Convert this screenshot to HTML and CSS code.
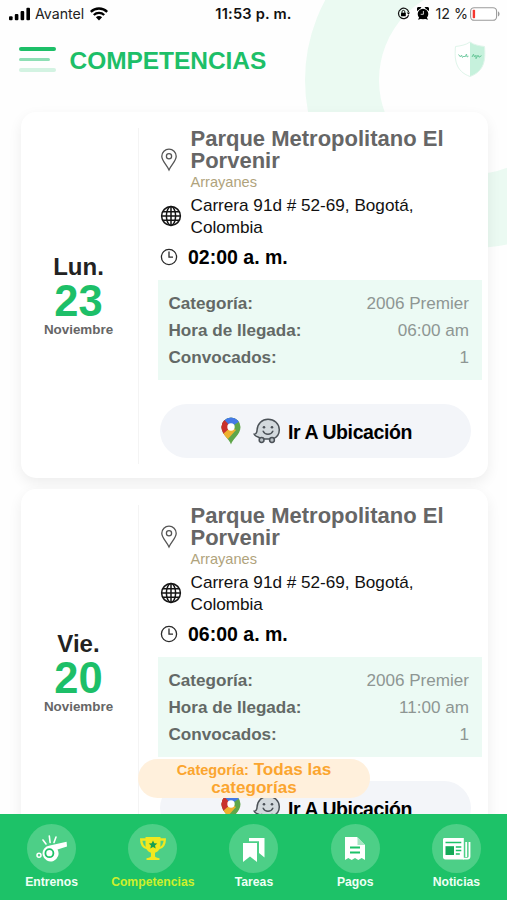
FILE: index.html
```html
<!DOCTYPE html>
<html lang="es">
<head>
<meta charset="utf-8">
<meta name="viewport" content="width=device-width, initial-scale=1">
<title>Competencias</title>
<link rel="stylesheet" href="styles.css">
</head>
<body>
<svg class="defs" aria-hidden="true">
  <symbol id="pin" viewBox="0 0 18 24">
    <path d="M9 22C6.500 16.500 1.800 13 1.800 8.300a7.200 7.200 0 0 1 14.400 0C16.200 13 11.500 16.500 9 22z" fill="none" stroke="#555" stroke-width="1.300"/>
    <circle cx="9" cy="8.300" r="2.600" fill="none" stroke="#555" stroke-width="1.300"/>
  </symbol>
  <symbol id="globe" viewBox="0 0 22 22">
    <g fill="none" stroke="#151515" stroke-width="1.500">
      <circle cx="11" cy="11" r="9.400"/>
      <ellipse cx="11" cy="11" rx="4.600" ry="9.400"/>
      <path d="M11 1.600v18.800M1.600 11h18.800M3 6.700h16M3 15.300h16"/>
    </g>
  </symbol>
  <symbol id="clock" viewBox="0 0 18 18">
    <g fill="none" stroke="#2a2a2a" stroke-width="1.300">
      <circle cx="9" cy="9" r="7.600"/>
      <path d="M9 3.600v5.600h4"/>
    </g>
  </symbol>
  <symbol id="maps" viewBox="0 0 20 28">
    <clipPath id="drop"><path d="M10 27.500C8.500 22 .5 17.500.5 9.900a9.500 9.500 0 0 1 19 0C19.500 17.500 11.500 22 10 27.500z"/></clipPath>
    <g clip-path="url(#drop)">
      <path d="M0 0h20v28H0z" fill="#5fa64a"/>
      <path d="M10 10L3 3.500 -2 8v12l4.500-1z" fill="#c9302c"/>
      <path d="M10 10L1.500 17.500 6 23l9-10z" fill="#eeb12f"/>
      <path d="M10 10L1 3.200 5-1h13l1 5z" fill="#4479e6"/>
      <path d="M10 10L0 12V0l4 3.400z" fill="#c9302c"/>
    </g>
    <circle cx="10" cy="10" r="3.700" fill="#fff"/>
  </symbol>
  <symbol id="waze" viewBox="0 0 28 26">
    <path d="M5.600 19.300C3.500 18.600 1.800 17.600 1.200 16.200c2.600-.2 2.800-1.800 2.900-4.400C4.500 5.600 9 1.200 15 1.200c6.300 0 11.300 4.700 11.300 10.500 0 4.500-2.600 7.800-6.600 9.200L9 21.100z" fill="#d3d9dd" stroke="#4b5157" stroke-width="1.500"/>
    <circle cx="8.600" cy="22" r="2.400" fill="#b9c0c5" stroke="#4b5157" stroke-width="1.500"/>
    <circle cx="19" cy="22" r="2.400" fill="#b9c0c5" stroke="#4b5157" stroke-width="1.500"/>
    <circle cx="11" cy="9.200" r="1.300" fill="#4b5157"/>
    <circle cx="19" cy="9.200" r="1.300" fill="#4b5157"/>
    <path d="M10.200 13.200c1.800 4 7.800 4 9.600 0" fill="none" stroke="#4b5157" stroke-width="1.500" stroke-linecap="round"/>
  </symbol>
</svg>

<div class="app">
  <div class="ring"></div>

  <div class="status">
    <div class="status-left">
      <svg width="22" height="14" viewBox="0 0 22 14"><rect x="0" y="9.200" width="3.600" height="4" rx="1"/><rect x="5.800" y="7" width="3.600" height="6.200" rx="1"/><rect x="11.600" y="4" width="3.600" height="9.200" rx="1"/><rect x="17.400" y=".8" width="3.600" height="12.400" rx="1"/></svg>
      <span class="carrier">Avantel</span>
      <svg width="18" height="14" viewBox="0 0 18 14"><g fill="none" stroke="#000" stroke-width="2.300"><path d="M.8 4.900a11.600 11.600 0 0 1 16.400 0"/><path d="M3.800 8a7.400 7.400 0 0 1 10.400 0"/></g><path d="M9 13.500L5.900 10.300a4.400 4.400 0 0 1 6.200 0z"/></svg>
    </div>
    <div class="time">11:53 p. m.</div>
    <div class="status-right">
      <svg width="13" height="13" viewBox="0 0 13 13"><path d="M11.600 8.200A5.200 5.200 0 1 1 11.700 5" fill="none" stroke="#111" stroke-width="1.200"/><path d="M9.700 5.400h3.300l-1.500 2.400z"/><rect x="4" y="5.700" width="4.800" height="3.500" rx=".5"/><path d="M5 6V4.800a1.400 1.400 0 0 1 2.800 0V6" fill="none" stroke="#111"/></svg>
      <svg class="alarm" width="12" height="13" viewBox="0 0 12 13"><circle cx="6" cy="7" r="5.300"/><path d="M.2 4a2.500 2.500 0 0 1 4.200-3.200zM11.800 4A2.500 2.500 0 0 0 7.600.8zM1 12.800l1.700-3.500 2.500 2.200zM11 12.800L9.300 9.300l-2.500 2.200z"/><path d="M6.400 4v3.300H3.700" fill="none" stroke="#fff" stroke-width=".8"/></svg>
      <span class="percent">12 %</span>
      <svg width="30" height="14" viewBox="0 0 30 14"><rect x=".6" y=".7" width="26" height="12.600" rx="3.600" fill="#fff" stroke="#9b9b9b" stroke-width="1.100"/><path d="M28 4.600c2 .5 2 4.300 0 4.800z" fill="#9b9b9b"/><rect x="2.700" y="2.800" width="2.400" height="8.400" rx=".8" fill="#f5372f"/></svg>
    </div>
  </div>

  <header class="header">
    <div class="menu"><i></i><i></i><i></i></div>
    <h1>COMPETENCIAS</h1>
    <svg class="shield" width="32" height="37" viewBox="0 0 32 37">
      <path d="M16 1C12 4 6 5 1.500 5.500 .5 18 1 30 16 35.500z" fill="#fff"/>
      <path d="M16 1c4 3 10 4 14.500 4.500C31.500 18 31 30 16 35.500z" fill="#c6f1dc"/>
      <path d="M16 1C12 4 6 5 1.500 5.500 .5 18 1 30 16 35.500 31 30 31.500 18 30.500 5.500 26 5 20 4 16 1z" fill="none" stroke="#dff5ea"/>
      <path d="M4.500 13.500l2 2.500 1-2 1 2.500 1.500-1.500 1 1 1.500-3 .5 3 1.500-.8" fill="none" stroke="#78cda6"/>
      <path d="M18 16l1.500-2.800 1 2.800 1.500-1.800v3.500l2-3.500 1 2 2.500-1.500" fill="none" stroke="#67c798"/>
    </svg>
  </header>

  <main class="list">
    <article class="card">
      <div class="date"><span class="day">Lun.</span><span class="num">23</span><span class="month">Noviembre</span></div>
      <div class="body">
        <div class="row"><svg class="ico-pin"><use href="#pin"/></svg><div><h2>Parque Metropolitano El Porvenir</h2><p class="field">Arrayanes</p></div></div>
        <div class="row address"><svg class="ico-globe"><use href="#globe"/></svg><p>Carrera 91d # 52-69, Bogotá, Colombia</p></div>
        <div class="row hour"><svg class="ico-clock"><use href="#clock"/></svg><b>02:00 a. m.</b></div>
        <dl class="info">
          <div><dt>Categoría:</dt><dd>2006 Premier</dd></div>
          <div><dt>Hora de llegada:</dt><dd>06:00 am</dd></div>
          <div><dt>Convocados:</dt><dd>1</dd></div>
        </dl>
        <button class="go"><svg class="ico-maps"><use href="#maps"/></svg><svg class="ico-waze"><use href="#waze"/></svg><span>Ir A Ubicación</span></button>
      </div>
    </article>

    <article class="card">
      <div class="date"><span class="day">Vie.</span><span class="num">20</span><span class="month">Noviembre</span></div>
      <div class="body">
        <div class="row"><svg class="ico-pin"><use href="#pin"/></svg><div><h2>Parque Metropolitano El Porvenir</h2><p class="field">Arrayanes</p></div></div>
        <div class="row address"><svg class="ico-globe"><use href="#globe"/></svg><p>Carrera 91d # 52-69, Bogotá, Colombia</p></div>
        <div class="row hour"><svg class="ico-clock"><use href="#clock"/></svg><b>06:00 a. m.</b></div>
        <dl class="info">
          <div><dt>Categoría:</dt><dd>2006 Premier</dd></div>
          <div><dt>Hora de llegada:</dt><dd>11:00 am</dd></div>
          <div><dt>Convocados:</dt><dd>1</dd></div>
        </dl>
        <button class="go"><svg class="ico-maps"><use href="#maps"/></svg><svg class="ico-waze"><use href="#waze"/></svg><span>Ir A Ubicación</span></button>
      </div>
    </article>
  </main>

  <div class="filter"><small>Categoría:</small> Todas las<br>categorías</div>

  <nav class="tabs">
    <a class="tab">
      <span class="disc"><svg width="34" height="30" viewBox="0 0 34 30"><path d="M14.800 11.500L31.600 7.800 32 12.500 22.500 15.500A8 8 0 1 1 14.800 11.500z" fill="#fff"/><circle cx="14.400" cy="19.200" r="4" fill="#fff" stroke="#1dc268" stroke-width="1.800"/><circle cx="4" cy="21.300" r="2" fill="none" stroke="#fff" stroke-width="1.500"/><path d="M8 6l3 4M14.300 2l.8 6.500M21 3l-2 5.500" stroke="#fff" stroke-width="1.600" stroke-linecap="round"/></svg></span>
      <span>Entrenos</span>
    </a>
    <a class="tab active">
      <span class="disc"><svg width="28" height="26" viewBox="0 0 28 26"><path d="M6.500 1h15v7c0 5-2.500 8-5.500 8.700V20c0 1.200 1 1.500 4.500 2.300V24h-13v-1.700C11 21.500 12 21.200 12 20v-3.300C9 16 6.500 13 6.500 8z" fill="#f1e81f"/><path d="M7 3.500H2.200c0 5 2 8 6.300 9M21 3.500h4.800c0 5-2 8-6.300 9" fill="none" stroke="#f1e81f" stroke-width="2.300"/><path d="M14 4.500l1.300 2.800 3 .3-2.300 2 .7 3-2.700-1.600-2.700 1.600.7-3-2.300-2 3-.3z" fill="#169f52"/></svg></span>
      <span>Competencias</span>
    </a>
    <a class="tab">
      <span class="disc"><svg width="26" height="28" viewBox="0 0 26 28"><path d="M2 8h14v19l-7-5.600L2 27z" fill="#fff"/><path d="M8 6.200V3h15.500v19.500L18 18V6.200z" fill="#fff"/></svg></span>
      <span>Tareas</span>
    </a>
    <a class="tab">
      <span class="disc"><svg width="24" height="26" viewBox="0 0 24 26"><path d="M2 1h12l8 8v15l-3.300-2-3.400 2-3.300-2-3.300 2-3.400-2L2 24z" fill="#fff"/><path d="M14.500 1l7.500 8h-7.500z" fill="#a7e6c4"/><path d="M7 11.500h10M7 16.500h10" stroke="#1dc268" stroke-width="2"/></svg></span>
      <span>Pagos</span>
    </a>
    <a class="tab">
      <span class="disc"><svg width="30" height="26" viewBox="0 0 30 26"><path d="M3.500 2h19.300v21.500H4.500C2.800 23.500 2 22.500 2 21V3.500C2 2.500 2.500 2 3.500 2z" fill="#fff"/><path d="M25.200 6v15M22 22.600h4.500c1.500 0 2-.6 2-2V6" fill="none" stroke="#fff" stroke-width="1.800"/><path d="M4.500 6.600h15.800M14.800 11h5.500M14.800 14.500h5.500M14.800 18h4" stroke="#1dc268" stroke-width="1.500"/><rect x="4.500" y="10.200" width="8.500" height="8.800" fill="#15a958"/></svg></span>
      <span>Noticias</span>
    </a>
  </nav>
</div>
</body>
</html>
```

FILE: styles.css
```css
* { box-sizing: border-box; margin: 0; padding: 0; }

body {
  font-family: "Liberation Sans", Arial, sans-serif;
  background: #fff;
  overflow: hidden;
}

.defs { position: absolute; width: 0; height: 0; }
svg { display: block; flex: none; }

.app {
  position: relative;
  width: 507px;
  height: 900px;
  overflow: hidden;
  display: flex;
  flex-direction: column;
  background: #fefefe;
}

/* decorative ring behind the header */
.ring {
  position: absolute;
  left: 305px;
  top: -88px;
  width: 336px;
  height: 336px;
  border: 74px solid #ebfaf2;
  border-radius: 50%;
}

.status {
  position: relative;
  height: 27px;
  display: grid;
  grid-template-columns: 1fr auto 1fr;
  align-items: center;
  padding: 0 7px 0 9px;
  font-family: Inter, sans-serif;
  color: #222;
}
.status-left, .status-right { display: flex; align-items: center; }
.status-right { justify-content: flex-end; }
.carrier { font-size: 14.2px; margin: 0 6px 0 4px; }
.time { font-size: 14.6px; font-weight: 600; letter-spacing: 0.2px; margin-right: 2px; color: #111; }
.alarm { margin: 0 6px 0 7px; }
.percent { font-size: 14.3px; margin-right: 2px; }

.header {
  position: relative;
  height: 85px;
  display: flex;
  align-items: flex-start;
  padding: 14px 21px 0 19px;
}
.menu { width: 37px; padding-top: 6px; display: flex; flex-direction: column; gap: 7px; margin-right: 13.500px; }
.menu i { height: 3.500px; border-radius: 2px; background: #1dbf68; }
.menu i:nth-child(2) { width: 31px; background: #8edfb5; }
.menu i:nth-child(3) { background: #d3f3e2; }
.header h1 { font-size: 24.5px; line-height: 39px; letter-spacing: -0.05px; color: #1dbf68; flex: 1; }

.list { position: relative; padding: 0 19px 0 20.500px; display: flex; flex-direction: column; gap: 11px; }

.card {
  height: 366px;
  flex: none;
  display: flex;
  padding: 16px 6.500px 14px 0;
  background: #fff;
  border-radius: 15px;
  box-shadow: 0 5px 14px rgba(0, 0, 0, 0.07);
}
.date {
  width: 118px;
  flex: none;
  padding-right: 1px;
  border-right: 1px solid #f4f4f4;
  display: flex;
  flex-direction: column;
  align-items: center;
  justify-content: center;
}
.day { font-size: 24px; line-height: 28px; font-weight: bold; color: #222; }
.num { font-size: 43.5px; line-height: 40px; font-weight: bold; color: #1dbf68; }
.month { font-size: 13.4px; line-height: 18px; font-weight: bold; color: #666; }

.body { flex: 1; padding-left: 19px; }
.row { display: grid; grid-template-columns: 33px 1fr; align-items: center; }
.ico-pin { width: 18px; height: 24px; margin-left: 2.500px; }
.ico-globe { width: 22px; height: 22px; margin-left: 2px; }
.ico-clock { width: 18px; height: 18px; margin-left: 2.500px; }
h2 { font-size: 22px; line-height: 22px; color: #666; }
.field { font-size: 14.6px; line-height: 20px; color: #b0a37c; }
.address { margin-top: 2px; font-size: 17.15px; line-height: 22px; color: #111; padding-right: 30px; }
.hour { grid-template-columns: 30.500px 1fr; margin-top: 8px; font-size: 19.5px; line-height: 22px; color: #000; }

.info { margin-top: 12px; height: 100px; padding: 9.500px 12.500px 0 11px; background: #ecfaf4; font-size: 17.1px; line-height: 27px; }
.info div { display: flex; justify-content: space-between; }
.info dt { font-weight: bold; color: #636966; }
.info dd { color: #8e9693; }

.go {
  width: 311px;
  height: 54px;
  margin: 24px 0 0 2px;
  padding-left: 3px;
  border: 0;
  border-radius: 27px;
  background: #f3f5f9;
  display: flex;
  align-items: center;
  justify-content: center;
  font: bold 19.5px/24px "Liberation Sans", Arial, sans-serif;
  letter-spacing: -0.4px;
  color: #000;
}
.go span { padding-top: 1px; }
.ico-maps { width: 20px; height: 28px; margin-right: 12px; }
.ico-waze { width: 28px; height: 26px; margin-right: 7px; }

/* floating filter above the list */
.filter {
  position: absolute;
  left: 138px;
  top: 758.500px;
  width: 232px;
  height: 39px;
  padding-top: 2px;
  border-radius: 20px;
  background: #fff0dc;
  text-align: center;
  font-size: 17.1px;
  font-weight: bold;
  line-height: 17px;
  color: #fba52f;
}
.filter small { font-size: 14.6px; }

.tabs {
  position: absolute;
  left: 0;
  right: 0;
  bottom: 0;
  height: 86px;
  display: grid;
  grid-template-columns: repeat(5, 1fr);
  background: #1dc268;
  padding: 10px 0 0 1px;
}
.tab { display: flex; flex-direction: column; align-items: center; font-size: 12.2px; line-height: 16px; font-weight: bold; color: #effff5; }
.disc { width: 49px; height: 49px; margin-bottom: 1px; border-radius: 50%; background: #4dcf87; display: flex; align-items: center; justify-content: center; }
.active { color: #cdf02c; }
```
